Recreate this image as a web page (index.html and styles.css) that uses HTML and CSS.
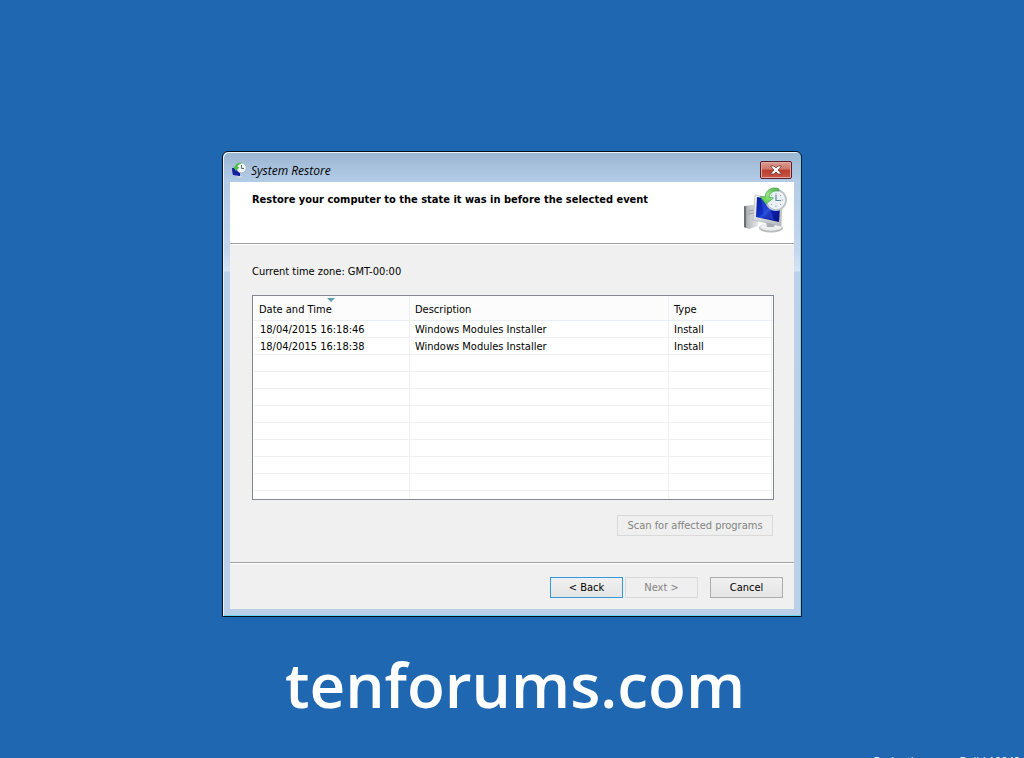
FILE: index.html
```
<!DOCTYPE html>
<html lang="en">
<head>
	<meta charset="utf-8" />
	<meta name="viewport" content="width=device-width, initial-scale=1.0" />
	<title>System Restore</title>
	<link rel="stylesheet" href="styles.css">
</head>
<body>
	<svg class="symbols" width="0" height="0" aria-hidden="true">
		<defs>
			<linearGradient id="screen" x1="0" y1="0" x2="1" y2="1">
				<stop offset="0" stop-color="#0a1c9a" />
				<stop offset="0.45" stop-color="#1030c8" />
				<stop offset="0.5" stop-color="#2450d8" />
				<stop offset="0.6" stop-color="#0b1fae" />
				<stop offset="1" stop-color="#07107c" />
			</linearGradient>
			<linearGradient id="metal" x1="0" y1="0" x2="1" y2="1">
				<stop offset="0" stop-color="#f6f7f8" />
				<stop offset="1" stop-color="#b3b8bd" />
			</linearGradient>
			<linearGradient id="tower" x1="0" y1="0" x2="1" y2="0">
				<stop offset="0" stop-color="#85898d" />
				<stop offset="0.25" stop-color="#b5b9bc" />
				<stop offset="1" stop-color="#e6e8e9" />
			</linearGradient>
			<linearGradient id="arrow" x1="0" y1="1" x2="1" y2="0">
				<stop offset="0" stop-color="#4fbe45" />
				<stop offset="0.5" stop-color="#8fe67b" />
				<stop offset="1" stop-color="#4fa94a" />
			</linearGradient>
		</defs>
	</svg>

	<div class="window">
		<div class="titlebar">
			<svg class="titleIcon" viewBox="0 0 16 16" aria-hidden="true">
				<path d="M1 6l8 1v7l-7-1z" fill="#0b18a0" />
				<path d="M1 6l4 1 2 6-5 0z" fill="#17239c" />
				<path d="M5 14.500l5-.5 2 1-5 .8z" fill="#d5dade" />
				<circle cx="10.500" cy="6" r="4.900" fill="#eef3f5" stroke="#a8b7bd" />
				<path d="M10.500 3v3.500h2.500" fill="none" stroke="#5c6c74" />
				<path d="M10 .8C6.500 .5 4.500 2.200 4 4.800L2 4.600l3 4.400 3.500-3.700-2-.3C7 3.300 8.200 2 10 2z" fill="#4fc04a" />
			</svg>
			<span class="titleText">System Restore</span>
			<button class="close" type="button" aria-label="Close">
				<svg viewBox="0 0 14 10" aria-hidden="true">
					<path d="M1.500 1h3.500L7 3l2-2h3.500L9.100 5l3.400 4H9L7 7 5 9H1.500l3.400-4z" fill="#ffffff" stroke="#6b3a3a" stroke-width="0.800" />
				</svg>
			</button>
		</div>

		<div class="client">
			<div class="header">
				<h1>Restore your computer to the state it was in before the selected event</h1>
				<svg class="headerIcon" viewBox="0 0 48 48" aria-hidden="true">
					<path d="M3 20l9-1 5 1v20l-9 3-5-2z" fill="url(#tower)" />
					<path d="M3 20l2 1v21l-2-1z" fill="#6c7074" />
					<path d="M7 25l6-1M7 28l6-1" stroke="#9a9fa3" />
					<ellipse cx="30" cy="42" rx="12" ry="4.500" fill="#b8bcbf" />
					<ellipse cx="30" cy="41" rx="11" ry="3.700" fill="#eceeef" />
					<path d="M25 35l9 2-1 4h-7z" fill="#a9aeb2" />
					<path d="M14 9l27 5-1 26-28-6z" fill="url(#metal)" stroke="#a2a7ab" stroke-width="0.500" />
					<path d="M16 11L39.500 15.500 38 36l-23-5z" fill="url(#screen)" />
					<path d="M20 12l6 1 7 21-10-2z" fill="#3858df" opacity="0.450" />
					<circle cx="35" cy="14" r="10" fill="#f3f7f8" stroke="#bac5ca" stroke-width="1.800" />
					<circle cx="35" cy="14" r="8" fill="#e8f0f4" />
					<path d="M35 7v1.500M35 19.500V21M28 14h1.500M40.500 14H42M30 9l1 1M40 9l-1 1M30 19l1-1M40 19l-1-1" stroke="#9caab2" />
					<path d="M35 9v5.500h5" fill="none" stroke="#64859c" stroke-width="1.200" />
					<path d="M38 3C32 0 24.500 3.500 24 11l-5-.5 6 7.500 7.500-6-4.500-.7C28.500 7 32.500 4.200 38 5z" fill="url(#arrow)" stroke="#42a34b" stroke-width="0.700" />
				</svg>
			</div>

			<div class="content">
				<p class="timeZone">Current time zone: GMT-00:00</p>
				<div class="list">
					<table>
						<colgroup>
							<col class="colDate"><col class="colDescription"><col class="colType"><col>
						</colgroup>
						<thead>
							<tr><th aria-sort="descending">Date and Time</th><th>Description</th><th>Type</th><td></td></tr>
						</thead>
						<tbody>
							<tr><td>18/04/2015 16:18:46</td><td>Windows Modules Installer</td><td>Install</td><td></td></tr>
							<tr><td>18/04/2015 16:18:38</td><td>Windows Modules Installer</td><td>Install</td><td></td></tr>
							<tr><td></td><td></td><td></td><td></td></tr>
							<tr><td></td><td></td><td></td><td></td></tr>
							<tr><td></td><td></td><td></td><td></td></tr>
							<tr><td></td><td></td><td></td><td></td></tr>
							<tr><td></td><td></td><td></td><td></td></tr>
							<tr><td></td><td></td><td></td><td></td></tr>
							<tr><td></td><td></td><td></td><td></td></tr>
							<tr><td></td><td></td><td></td><td></td></tr>
							<tr><td></td><td></td><td></td><td></td></tr>
						</tbody>
					</table>
				</div>
				<button class="btn scan" type="button" disabled>Scan for affected programs</button>
			</div>

			<div class="footer">
				<button class="btn primary" type="button">&lt; Back</button>
				<button class="btn" type="button" disabled>Next &gt;</button>
				<button class="btn cancel" type="button">Cancel</button>
			</div>
		</div>
	</div>

	<p class="site">tenforums.com</p>
	<p class="build">Evaluation copy. Build 10049</p>
</body>
</html>
```
FILE: styles.css
```
*{
	box-sizing: border-box;
	margin: 0;
	padding: 0;
}
body{
	min-height: 100vh;
	position: relative;
	overflow: hidden;
	display: flex;
	flex-direction: column;
	align-items: center;
	padding-top: 151px;
	background: #1f67b1;
	color: #000000;
	font-family: "DejaVu Sans Condensed", "DejaVu Sans", sans-serif;
	font-size: 11px;
	line-height: 16px;
}
.symbols{
	position: absolute;
}
.window{
	width: 580px;
	max-width: 100%;
	padding: 0 6px 6px;
	border: 1px solid #07111c;
	border-radius: 6px 6px 0 0;
	background: linear-gradient(#9bb5d2 0, #b4cce6 30px, #c3d7ee 100px, #d5e5f5 119px, #b9d1ea 120px, #bacfe8 100%);
	box-shadow: inset 1px 1px 0 #e8f4fc, inset -1px -1px 0 #62d8f4;
}
.titlebar{
	display: flex;
	align-items: center;
	height: 30px;
	padding: 6px 3px 0 2px;
}
.titleIcon{
	width: 16px;
	height: 16px;
}
.titleText{
	flex: 1;
	padding: 2px 0 0 4px;
	font-family: "Open Sans", "Noto Sans", sans-serif;
	font-size: 12px;
	font-style: italic;
	line-height: 18px;
}
.close{
	display: flex;
	align-items: center;
	justify-content: center;
	width: 32px;
	height: 18px;
	border: 1px solid #541f2a;
	border-radius: 2px;
	background: linear-gradient(#dc9c91 0, #cc7768 45%, #b93d2b 50%, #c95743 100%);
	box-shadow: inset 0 0 0 1px #e3aaa0;
}
.close svg{
	width: 14px;
	height: 10px;
}
.client{
	margin: 0 1px 1px;
	background: #f0f0f0;
}
.header{
	display: flex;
	justify-content: space-between;
	height: 62px;
	padding: 4px 5px 0 22px;
	background: #ffffff;
	border-bottom: 1px solid #a0a0a0;
}
.header h1{
	padding-top: 6px;
	font-size: 11px;
	font-weight: bold;
}
.headerIcon{
	flex: none;
	width: 48px;
	height: 48px;
}
.content{
	display: flex;
	flex-direction: column;
	border-top: 1px solid #ffffff;
	padding: 19px 20px 26px 22px;
}
.timeZone{
	margin-bottom: 15px;
}
.list{
	height: 205px;
	overflow: hidden;
	border: 1px solid #828790;
	background: #ffffff;
}
.list table{
	width: 100%;
	table-layout: fixed;
	border-collapse: separate;
	border-spacing: 0;
}
.colDate{
	width: 157px;
}
.colDescription{
	width: 259px;
}
.colType{
	width: 103px;
}
.list th,
.list td{
	height: 17px;
	padding: 1px 0 0 5px;
	border-right: 1px solid #f0f0f0;
	border-bottom: 1px solid #f0f0f0;
	line-height: 15px;
	text-align: left;
	font-weight: normal;
	white-space: nowrap;
}
.list td:first-child{
	padding-left: 7px;
}
.list tr > :last-child{
	padding: 0;
	border-right: 0;
}
.list thead th,
.list thead td{
	height: 25px;
	padding-top: 3px;
	background: #fcfcfd;
	border-color: #e8f0f6;
}
.list th:first-child{
	position: relative;
	padding-left: 6px;
}
.list th:first-child::after{
	content: "";
	position: absolute;
	top: 2px;
	left: 50%;
	margin-left: -4px;
	border: 4px solid transparent;
	border-top-color: #5a9cb4;
	border-bottom: 0;
}
.btn{
	width: 73px;
	height: 21px;
	padding-top: 1px;
	border: 1px solid #acacac;
	background: linear-gradient(#f0f0f0, #e5e5e5);
	color: #000000;
	font: inherit;
}
.btn:disabled{
	border-color: #d9d9d9;
	background: #efefef;
	color: #838383;
}
.primary{
	border-color: #3399de;
}
.scan{
	width: 156px;
	align-self: flex-end;
	margin: 15px 1px 0 0;
}
.footer{
	display: flex;
	justify-content: flex-end;
	gap: 2px;
	padding: 14px 11px 11px;
	border-top: 1px solid #a0a0a0;
	box-shadow: inset 0 1px 0 #ffffff;
}
.cancel{
	margin-left: 10px;
}
.site{
	margin-top: 22px;
	padding-left: 6px;
	color: #ffffff;
	font-family: "Open Sans", "Noto Sans", sans-serif;
	font-size: 62px;
	font-weight: 600;
	line-height: 90px;
}
/* desktop watermark, runs off the bottom edge */
.build{
	position: absolute;
	right: 4px;
	bottom: -11px;
	color: #ffffff;
	font-family: "Open Sans", "Noto Sans", sans-serif;
	font-size: 11px;
}
```
